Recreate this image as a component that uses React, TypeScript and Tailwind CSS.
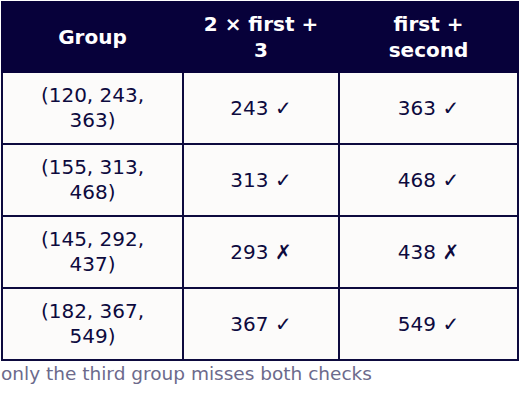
const rows: [string, string, string, boolean][] = [
  ['(120, 243, 363)', '243', '363', true],
  ['(155, 313, 468)', '313', '468', true],
  ['(145, 292, 437)', '293', '438', false],
  ['(182, 367, 549)', '367', '549', true],
];

export default function App() {
  return (
    <div className="w-[520px] h-[402px] bg-white pl-px pt-px" style={{ fontFamily: '"DejaVu Sans", sans-serif' }}>
      <table className="table-fixed border-collapse w-[516px] text-[20px] leading-[25px] text-[#0d0a3e]">
        <colgroup>
          <col className="w-[181px]" />
          <col className="w-[156px]" />
          <col className="w-[179px]" />
        </colgroup>
        <thead>
          <tr className="bg-[#07013a] text-white font-bold h-[70px]">
            <th className="border-2 border-[#07013a] px-3 py-1 leading-[26px]">Group</th>
            <th className="border-2 border-[#07013a] px-3 py-1 leading-[26px]">2 × first + 3</th>
            <th className="border-2 border-[#07013a] px-3 py-1 leading-[26px]">first + second</th>
          </tr>
        </thead>
        <tbody className="bg-[#fcfbfa]">
          {rows.map(([g, a, b, ok]) => (
            <tr key={g} className="h-[72px]">
              <td className="border-2 border-[#0d0a3e] px-[24px] py-2.5 text-center">{g}</td>
              <td className="border-2 border-[#0d0a3e] px-5 py-2.5 text-center">{a} {ok ? '✓' : '✗'}</td>
              <td className="border-2 border-[#0d0a3e] px-5 py-2.5 text-center">{b} {ok ? '✓' : '✗'}</td>
            </tr>
          ))}
        </tbody>
      </table>
      <p className="text-[18.5px] leading-6 text-[#6c6a8c] mt-[1px]">only the third group misses both checks</p>
    </div>
  );
}
